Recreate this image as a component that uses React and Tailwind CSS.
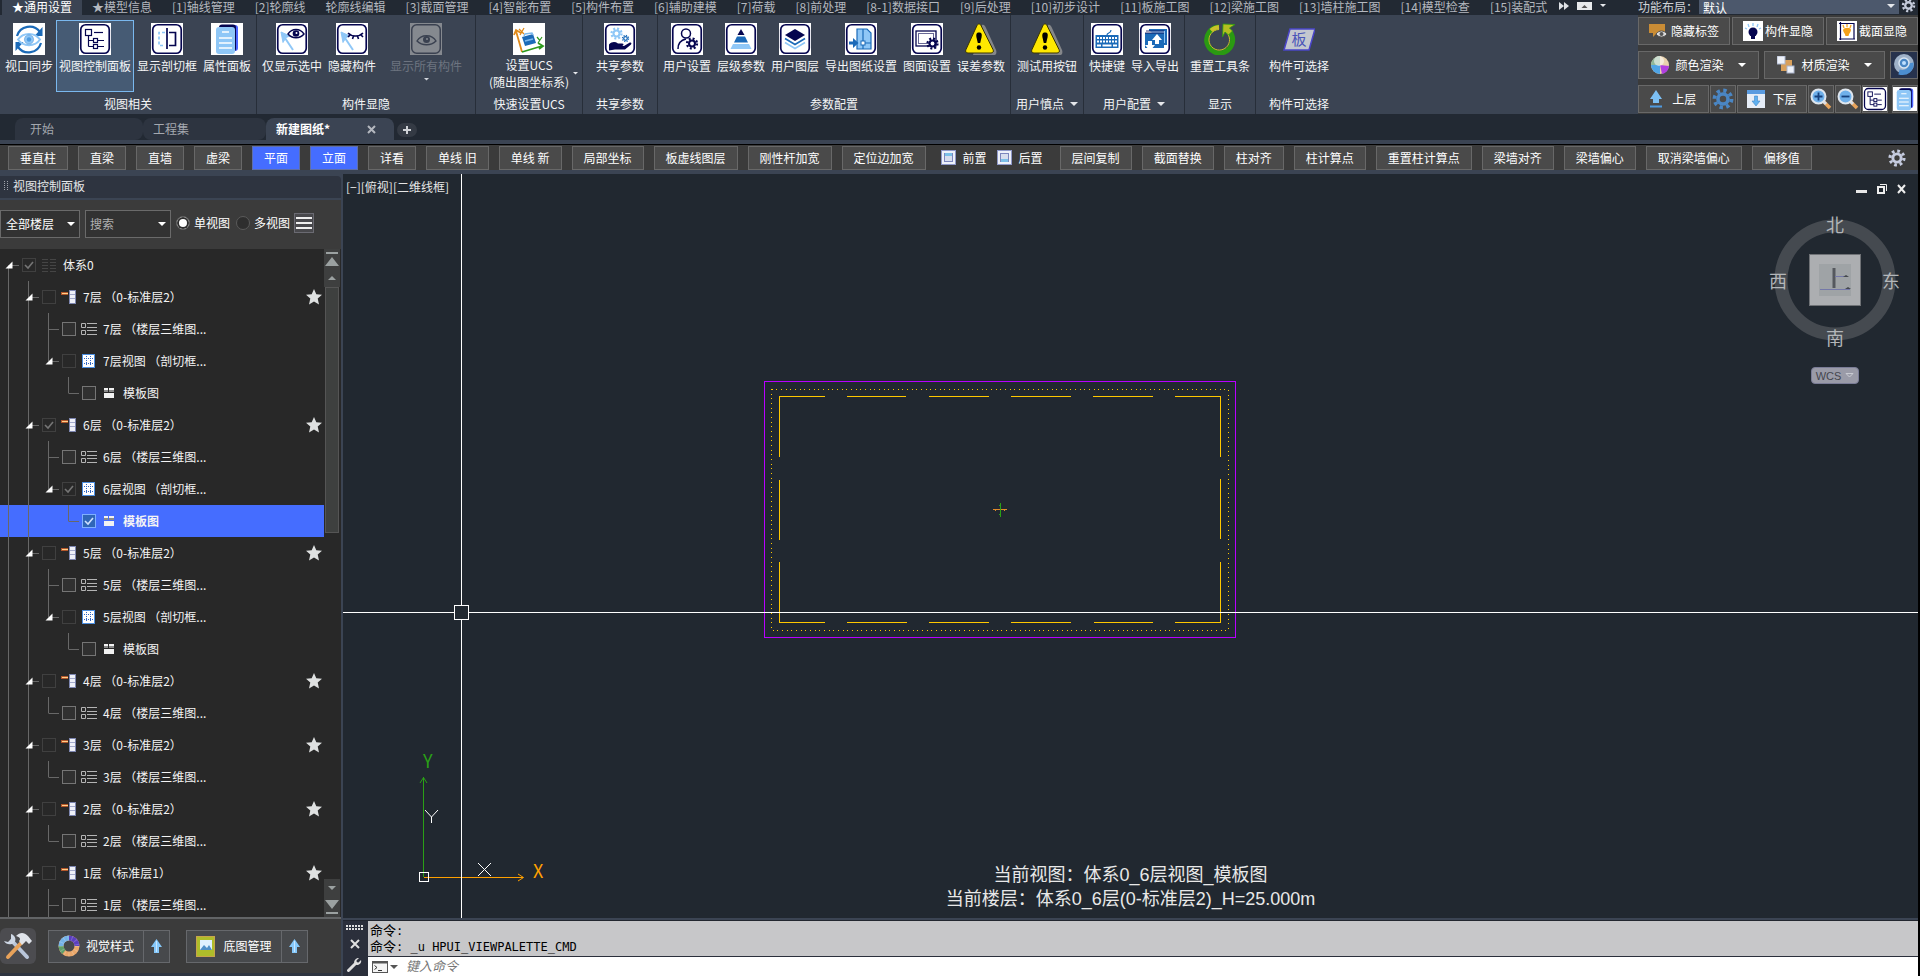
import React, { useState } from 'react';

const NAVY = '#05054f';
const SKY = '#8fc7f7';
const BLUE = '#1b6ab8';

/* ---------- shared drawings ---------- */

function Frame({ children }) {
  return (
    <svg width="32" height="32" viewBox="0 0 32 32" fill="none">
      <rect width="32" height="32" fill="#fff" />
      <rect x="1.75" y="1.75" width="28.5" height="28.5" rx="5" stroke={NAVY} strokeWidth="1.7" />
      {children}
    </svg>
  );
}

// teeth are a dashed ring around the body
function Gear({ cx, cy, r, color, hole = '#fff' }) {
  const tooth = (2 * Math.PI * r) / 16;
  return (
    <g fill="none">
      <circle cx={cx} cy={cy} r={r} stroke={color} strokeWidth={r * 0.45} strokeDasharray={`${tooth} ${tooth}`} />
      <circle cx={cx} cy={cy} r={r * 0.8} fill={color} />
      <circle cx={cx} cy={cy} r={r * 0.38} fill={hole} />
    </g>
  );
}

function Caret({ className = 'text-gray-200', size = 8 }) {
  return (
    <svg className={className} width={size} height={size / 2} viewBox="0 0 8 4">
      <path d="M0 0h8L4 4z" fill="currentColor" />
    </svg>
  );
}

function Pages({ size = 32 }) {
  return (
    <svg width={size} height={size} viewBox="0 0 32 32" fill="none">
      <rect width="32" height="32" fill="#fff" />
      <rect x="10" y="2" width="17" height="26" rx="3" fill="#4a63ff" />
      <rect x="8" y="1.5" width="17" height="27" rx="3" fill={NAVY} />
      <rect x="5" y="4" width="19" height="27" rx="3" fill={SKY} />
      <path d="M11 9h7M8 15h13M8 20h13M8 25h13" stroke="#fff" strokeWidth="1.5" />
    </svg>
  );
}

function TreeGlyph() {
  return (
    <g stroke={NAVY} strokeWidth="1.2">
      <rect x="6.5" y="6.5" width="6" height="6" />
      <path d="M15 9.5h9" />
      <path d="M9.500 13v10.500" />
      <path d="M9.500 17.500h5M9.500 23.500h5M19 17.500h6M19 23.500h6" />
      <rect x="14.500" y="15.500" width="4" height="4" />
      <rect x="14.500" y="21.500" width="4" height="4" />
    </g>
  );
}

function PickArrow() {
  return (
    <g>
      <path d="M17 27 9 15" stroke={SKY} strokeWidth="2" />
      <path d="M5 9l9 4-4 1.500-3 5z" fill={SKY} stroke={SKY} />
    </g>
  );
}

function Warning() {
  return (
    <svg width="32" height="32" viewBox="0 0 32 32">
      <path d="M17 2c2-1 3 1 4 3l10 22c1 3 0 5-2 5H8z" fill="#85878a" />
      <path d="M12 2.500c1-2 3-2 4 0l12 24c1 2 0 3.500-2 3.500H3c-2 0-3-1.500-2-3.500z" fill="#ffe800" stroke="#3a3500" strokeWidth="1" />
      <path d="M14 9.500c2.800 0 3 2 2.600 4.500L15.200 20h-2.400L11.400 14c-.4-2.500 0-4.500 2.600-4.500z" fill="#000" />
      <circle cx="14" cy="24.500" r="2.200" fill="#000" />
    </svg>
  );
}

/* ---------- ribbon icons ---------- */

const icons = {
  sync: (
    <svg width="32" height="32" viewBox="0 0 32 32" fill="none">
      <rect width="32" height="32" fill="#fff" />
      <path d="M4 13A13 13 0 0 1 27 9M28 20A13 13 0 0 1 5 24" stroke={BLUE} strokeWidth="2.200" />
      <path d="M29.500 4v9h-8zM2.500 28v-9h8z" fill={BLUE} />
      <path d="M5 16.500c5-7.500 17-7.500 22 0-5 7.500-17 7.500-22 0z" stroke={SKY} strokeWidth="2" />
      <circle cx="16" cy="16.500" r="4.600" fill={SKY} stroke={BLUE} strokeOpacity=".35" />
      <circle cx="16" cy="16.500" r="2.200" fill="#4d9be0" />
    </svg>
  ),
  tree: <Frame><TreeGlyph /></Frame>,
  section: (
    <Frame>
      <path d="M14 9.500H8v13h6" stroke={SKY} strokeWidth="1.700" strokeDasharray="3 2" />
      <path d="M16 5v21M18 9.500h6.500v13H18" stroke={NAVY} strokeWidth="1.700" />
    </Frame>
  ),
  pages: <Pages />,
  onlySelected: (
    <Frame>
      <PickArrow />
      <path d="M12 11c4-6 12-6 16 0-4 5-12 5-16 0z" stroke={NAVY} strokeWidth="1.400" />
      <circle cx="20" cy="10.500" r="3.300" fill={NAVY} />
      <circle cx="20.500" cy="10" r="1" fill="#fff" />
    </Frame>
  ),
  hide: (
    <Frame>
      <PickArrow />
      <path d="M12 10c4 4 11 4 15 0M14 12l-2 2M17.500 13l-1 3M21.500 13l1 3M25 12l2 2" stroke={NAVY} strokeWidth="1.600" />
    </Frame>
  ),
  showAll: (
    <svg width="32" height="32" viewBox="0 0 32 32" fill="none">
      <rect width="32" height="32" fill="#85898f" />
      <rect x="1.750" y="1.750" width="28.500" height="28.500" rx="5" stroke="#3a4150" strokeWidth="1.500" />
      <path d="M7 18c4-7 15-7 19 0-5 5-14 5-19 0z" stroke="#3a4150" strokeWidth="1.400" />
      <circle cx="16.500" cy="16.500" r="3.500" fill="#3a4150" />
      <circle cx="17" cy="16" r="1" fill="#85898f" />
    </svg>
  ),
  ucs: (
    <svg width="32" height="32" viewBox="0 0 32 32" fill="none">
      <rect width="32" height="32" fill="#fff" />
      <path d="M9 29 3 8M1 12l2-5 5 3" stroke="#e08a1a" strokeWidth="1.800" />
      <path d="m6 6 5 5M11 5 7 12" stroke="#e08a1a" strokeWidth="1.300" />
      <path d="m9 29 20-6M25 20l5 3-4 3" stroke="#2e9a1d" strokeWidth="1.800" />
      <path d="m24 14 2.500 3M29 14l-4 6" stroke="#2e9a1d" strokeWidth="1.200" />
      <path d="m9 14 11-3 3 9-11 3z" fill={BLUE} />
      <path d="m11 13 1-2 7-1 1 2M12 18l8-2" stroke="#7db9ee" strokeWidth="1.500" />
    </svg>
  ),
  share: (
    <Frame>
      <Gear cx={12.5} cy={10.5} r={5} color={SKY} />
      <Gear cx={21.5} cy={15.5} r={3} color={BLUE} />
      <path d="M5 21.500c3-3 6-3 9-1h4c2 0 2 2 0 2.500h-3 5l5-3c2-1 3 0 2 1.500l-6 5H11l-6 1z" fill={NAVY} />
    </Frame>
  ),
  user: (
    <Frame>
      <circle cx="15" cy="10.500" r="4.500" stroke={NAVY} strokeWidth="1.500" />
      <path d="M7 26c0-6 3-9 8-10" stroke={NAVY} strokeWidth="1.500" />
      <Gear cx={21} cy={20.5} r={5} color={NAVY} />
    </Frame>
  ),
  pyramid: (
    <Frame>
      <path d="M16 6l3.500 6h-7z" fill={NAVY} />
      <path d="M12 13.500h8l3 6H9z" fill={BLUE} />
      <path d="M8 21h16l2.500 5h-21z" fill={SKY} />
    </Frame>
  ),
  layers: (
    <Frame>
      <path d="M16 6l10 6-10 6-10-6z" fill={NAVY} />
      <path d="m6 15.500 10 6 10-6" stroke={BLUE} strokeWidth="1.600" />
      <path d="m6 19.500 10 6 10-6" stroke={SKY} strokeWidth="1.600" />
    </Frame>
  ),
  exportSheet: (
    <Frame>
      <path d="M12 6h10l4 4v16H12z" fill={SKY} stroke={BLUE} strokeWidth="1.200" />
      <path d="M18 6v20M18 20h8" stroke={BLUE} strokeWidth="1.200" />
      <rect x="16" y="18" width="4" height="4" fill="#fff" stroke={BLUE} />
      <path d="M4 18.500h4V15l5.500 5-5.500 5v-3.500H4z" fill={BLUE} />
    </Frame>
  ),
  drawing: (
    <Frame>
      <rect x="5" y="8" width="20" height="15" stroke={NAVY} strokeWidth="1.300" />
      <rect x="7.500" y="10.500" width="15" height="10" stroke={NAVY} strokeWidth="1" strokeOpacity=".6" />
      <Gear cx={21.5} cy={20.500} r={5} color={NAVY} />
    </Frame>
  ),
  warning: <Warning />,
  keyboard: (
    <Frame>
      <path d="M16 12c0-3 4-1 4-5" stroke={BLUE} strokeWidth="1.200" />
      <rect x="4.500" y="12" width="23" height="13" fill={BLUE} />
      <path d="M6 15h20M6 18.500h20" stroke="#fff" strokeWidth="2" strokeDasharray="2 1" />
      <path d="M6 22.500h4M11.500 22.500h9M22 22.500h4" stroke="#fff" strokeWidth="2" />
    </Frame>
  ),
  transfer: (
    <Frame>
      <path d="M10 7h17v14h-3" stroke={BLUE} strokeWidth="2" fill={SKY} />
      <path d="M6 10h19v15H6z" fill={BLUE} />
      <path d="M6 10h19M7 8h18" stroke={NAVY} strokeWidth=".8" />
      <path d="M18 11l5 6h-3v4h-4v-4h-3zM11 28l-5-6h3v-4h4v4h3z" fill="#fff" />
    </Frame>
  ),
  reset: (
    <svg width="32" height="32" viewBox="0 0 32 32" fill="none">
      <path d="M25.500 8.500A13 13 0 1 1 15 4" stroke="#2a9a12" strokeWidth="5" />
      <path d="M23 10A10.300 10.300 0 1 1 15 6.500" stroke="#c9c02a" strokeWidth="1" />
      <path d="M7 7.500A13 13 0 0 1 15 4" stroke="#c9c02a" strokeWidth="4" />
      <path d="M19 1l12 .5-5.500 3.500 3 3-4 4-3.500-3-2.500 5z" fill="#b5bf20" stroke="#2a9a12" strokeWidth=".8" />
    </svg>
  ),
  slab: (
    <svg width="32" height="32" viewBox="0 0 32 32">
      <path d="M7 6h25l-6 21H1z" fill="#c3c7cf" stroke="#4a45c8" strokeWidth="1.500" />
      <text x="16" y="22" textAnchor="middle" fontSize="15" fill="#4a55b8">板</text>
    </svg>
  ),
};

/* ---------- menu bar ---------- */

const menuTabs = [
  '★通用设置', '★模型信息', '[1]轴线管理', '[2]轮廓线', '轮廓线编辑', '[3]截面管理', '[4]智能布置',
  '[5]构件布置', '[6]辅助建模', '[7]荷载', '[8]前处理', '[8-1]数据接口', '[9]后处理', '[10]初步设计',
  '[11]板施工图', '[12]梁施工图', '[13]墙柱施工图', '[14]模型检查', '[15]装配式',
];

function MenuBar() {
  return (
    <nav className="flex h-[15px] min-w-0 flex-1 bg-[#222933] pl-[2px] text-[#b4b8bf]">
      {menuTabs.map((tab, i) => (
        <button
          key={tab}
          className={
            'h-[15px] shrink-0 px-[10px] pb-[2px] leading-[13px] ' + (i === 0 ? 'bg-[#3b4453] text-white' : '')
          }
        >
          {tab}
        </button>
      ))}
      <span className="flex items-center gap-2 pb-1 pl-[2px]">
        <svg width="10" height="8" viewBox="0 0 10 8"><path d="M0 0l5 4-5 4zM5 0l5 4-5 4z" fill="#dfe2e6" /></svg>
        <svg width="15" height="8" viewBox="0 0 15 8"><rect width="15" height="8" fill="#e8eaec" /><path d="M4.500 6h6L7.500 3z" fill="#555" /></svg>
        <Caret size={6} />
      </span>
    </nav>
  );
}

/* ---------- ribbon ---------- */

const ribbonGroups = [
  {
    title: '视图相关', width: 'w-[257px]',
    items: [
      { icon: 'sync', label: '视口同步' },
      { icon: 'tree', label: '视图控制面板', active: true },
      { icon: 'section', label: '显示剖切框' },
      { icon: 'pages', label: '属性面板' },
    ],
  },
  {
    title: '构件显隐', width: 'w-[219px]',
    items: [
      { icon: 'onlySelected', label: '仅显示选中' },
      { icon: 'hide', label: '隐藏构件' },
      { icon: 'showAll', label: '显示所有构件', menu: true, disabled: true },
    ],
  },
  { title: '快速设置UCS', width: 'w-[107px]', items: [{ icon: 'ucs', label: '设置UCS', sub: '(随出图坐标系)' }] },
  { title: '共享参数', width: 'w-[75px]', items: [{ icon: 'share', label: '共享参数', menu: true }] },
  {
    title: '参数配置', width: 'w-[353px]',
    items: [
      { icon: 'user', label: '用户设置' },
      { icon: 'pyramid', label: '层级参数' },
      { icon: 'layers', label: '用户图层' },
      { icon: 'exportSheet', label: '导出图纸设置' },
      { icon: 'drawing', label: '图面设置' },
      { icon: 'warning', label: '误差参数' },
    ],
  },
  { title: '用户慎点', width: 'w-[73px]', more: true, items: [{ icon: 'warning', label: '测试用按钮' }] },
  {
    title: '用户配置', width: 'w-[101px]', more: true,
    items: [
      { icon: 'keyboard', label: '快捷键' },
      { icon: 'transfer', label: '导入导出' },
    ],
  },
  { title: '显示', width: 'w-[71px]', items: [{ icon: 'reset', label: '重置工具条' }] },
  { title: '构件可选择', width: 'w-[86px]', last: true, items: [{ icon: 'slab', label: '构件可选择', menu: true }] },
];

function RibbonButton({ item }) {
  return (
    <button
      disabled={item.disabled}
      className={
        'flex h-[72px] flex-col items-center border px-[2px] pt-[2px] ' +
        (item.active ? 'border-[#7ab8ee] bg-[#465b74] ' : 'border-transparent ') +
        (item.disabled ? 'mx-2 text-[#6d7480]' : 'text-[#f4f5f6]')
      }
    >
      {icons[item.icon]}
      {item.sub ? (
        <span className="relative mt-px leading-[17px]">
          {item.label}
          <br />
          {item.sub}
          <span className="absolute top-[16px] left-full"><Caret size={5} className="mx-1 text-gray-200" /></span>
        </span>
      ) : (
        <span className="mt-[3px] leading-4 whitespace-nowrap">{item.label}</span>
      )}
      {item.menu && <Caret size={5} className="mt-1 text-gray-300" />}
    </button>
  );
}

function Ribbon() {
  return (
    <div className="flex h-[99px] overflow-hidden bg-[#3b4453] text-[#f4f5f6]">
      {ribbonGroups.map((g) => (
        <section
          key={g.title}
          className={'flex shrink-0 flex-col pt-[5px] ' + g.width + (g.last ? '' : ' border-r border-[#272e39]')}
        >
          <div className="flex justify-center">
            {g.items.map((item) => <RibbonButton key={item.label} item={item} />)}
          </div>
          <h2 className="mt-[3px] flex items-center justify-center gap-[6px] leading-[18px]">
            {g.title}
            {g.more && <Caret />}
          </h2>
        </section>
      ))}
    </div>
  );
}

/* ---------- quick panel at the right of the ribbon ---------- */

const quickBtn = 'flex h-7 items-center justify-center border border-[#686868] bg-[#4a4a4a] text-white';

function Magnifier({ plus }) {
  return (
    <svg width="22" height="22" viewBox="0 0 22 22" fill="none">
      <path d="m14 14 6 6" stroke="#e8a45c" strokeWidth="3.500" />
      <path d="m13 13 3 3" stroke="#d8dde6" strokeWidth="3" />
      <circle cx="8.500" cy="8.500" r="7" fill="#6fb0ea" stroke="#dfe6ee" strokeWidth="2" />
      <path d={plus ? 'M4.500 8.500h8M8.500 4.500v8' : 'M4.500 8.500h8'} stroke="#16407c" strokeWidth="1.800" />
    </svg>
  );
}

function QuickPanel() {
  return (
    <aside className="w-[280px] shrink-0">
      <div className="flex h-[15px] items-start bg-[#222933] text-[#cfd2d6]">
        <label htmlFor="layout" className="w-[61px] leading-[13px]">功能布局：</label>
        <span className="relative flex-1">
          <select
            id="layout"
            className="block h-[14px] w-full appearance-none bg-[#4c586c] pl-1 leading-[13px] text-white outline-none"
          >
            <option>默认</option>
          </select>
          <Caret className="pointer-events-none absolute top-1 right-1 text-gray-200" />
        </span>
        <button aria-label="设置" className="w-[19px] pl-[2px]">
          <svg width="15" height="13" viewBox="0 2 15 13"><Gear cx={7.5} cy={7.5} r={5.5} color="#c5cbdb" hole="#222933" /></svg>
        </button>
      </div>
      <div className="flex h-[99px] flex-col gap-[6px] bg-[#3b3b3b] pt-[2px]">
        <div className="flex gap-[2px]">
          <button className={quickBtn + ' flex-1 gap-1'}>
            <svg width="18" height="16" viewBox="0 0 18 16">
              <path d="M0 1h16v9H8l-4 4v-4H0z" fill="#c98c35" />
              <path d="M7 11c3-4 8-4 11 0-3 4-8 4-11 0z" fill="#ddd" stroke="#555" />
              <circle cx="12.500" cy="11" r="2" fill="#555" />
            </svg>
            隐藏标签
          </button>
          <button className={quickBtn + ' flex-1 gap-[2px]'}>
            <svg width="20" height="20" viewBox="0 0 20 20">
              <rect width="20" height="20" fill="#fff" />
              <path d="M10 2v3M5 3l1 3M15 3l-1 3M2 7l2 1M18 7l-2 1" stroke={SKY} strokeWidth="1.300" />
              <circle cx="10" cy="11" r="4.500" fill={NAVY} />
              <rect x="8" y="14" width="4" height="4" fill={NAVY} />
            </svg>
            构件显隐
          </button>
          <button className={quickBtn + ' flex-1 gap-[2px]'}>
            <svg width="20" height="20" viewBox="0 0 20 20" fill="none">
              <rect width="20" height="20" fill="#fff" />
              <path d="M3.500 1v18M2 2.500h15v16M2 18h16" stroke={NAVY} strokeWidth="1.200" />
              <path d="M10 3v3M6 4l1 3M14 4l-1 3" stroke="#f5a623" strokeWidth="1.300" />
              <path d="M6 9c1-3 8-3 8 0 0 2-2 3-2.500 6h-3C8 12 6 11 6 9z" fill="#f5a11a" />
            </svg>
            截面显隐
          </button>
        </div>
        <div className="flex gap-[5px]">
          <button className={quickBtn + ' flex-1 gap-[6px]'}>
            <svg width="18" height="18" viewBox="0 0 18 18">
              <circle cx="9" cy="9" r="9" fill="#e9d2ad" />
              <path d="M9 9 9 0A9 9 0 0 0 0 9z" fill="#8fb79a" />
              <path d="M9 9H0a9 9 0 0 0 9 9z" fill="#4fa4e6" />
              <path d="m9 9 2 9a9 9 0 0 0 7-8z" fill="#b13fe0" />
              <circle cx="8" cy="5" r="5" fill="#fff" fillOpacity=".55" />
            </svg>
            颜色渲染
            <Caret className="ml-2 text-white" />
          </button>
          <button className={quickBtn + ' flex-1 gap-[6px]'}>
            <svg width="18" height="18" viewBox="0 0 18 18">
              <rect x="4" y="4" width="11" height="11" fill="#d9a05b" />
              <rect x="0" y="0" width="8" height="8" fill="#eef2fa" stroke="#aab4cc" />
              <rect x="10" y="10" width="7" height="7" fill="#eef2fa" stroke="#aab4cc" />
            </svg>
            材质渲染
            <Caret className="ml-2 text-white" />
          </button>
          <button aria-label="渲染" className={quickBtn + ' w-7'}>
            <svg width="26" height="26" viewBox="0 0 26 26" fill="none">
              <rect width="26" height="26" fill="#26324d" />
              <circle cx="13" cy="12" r="10" fill="#9fb2c9" />
              <path d="M8 20c8 2 13-3 12-9" stroke="#4c8ed0" strokeWidth="5" />
              <circle cx="13" cy="11" r="5" fill="#4a86c4" stroke="#d8e5f2" strokeWidth="1.500" />
              <circle cx="13" cy="11" r="2" fill="#bfe0ff" />
            </svg>
          </button>
        </div>
        <div className="flex gap-px">
          <button className={quickBtn + ' flex-1 gap-[10px]'}>
            <svg width="12" height="18" viewBox="0 0 12 18">
              <path d="M6 0l6 9H9v4H3V9H0z" fill="#7cc0f5" />
              <path d="M0 16.500h12" stroke="#4f9be0" strokeWidth="2" />
            </svg>
            上层
          </button>
          <button aria-label="楼层设置" className={quickBtn + ' w-[26px]'}>
            <svg width="22" height="22" viewBox="0 0 22 22"><Gear cx={11} cy={11} r={8.5} color="#4a86c4" hole="#4a4a4a" /></svg>
          </button>
          <button className={quickBtn + ' flex-1 gap-2'}>
            <svg width="18" height="18" viewBox="0 0 18 18">
              <rect width="18" height="18" fill="#e6edf7" />
              <rect width="18" height="4" fill="#5a9be0" />
              <path d="M7.500 6h3v5h2.500l-4 5-4-5h2.500z" fill="#5fb0f0" stroke="#3f86c8" strokeWidth=".6" />
            </svg>
            下层
          </button>
          <button aria-label="放大" className={quickBtn + ' w-[26px]'}><Magnifier plus /></button>
          <button aria-label="缩小" className={quickBtn + ' w-[26px]'}><Magnifier /></button>
          <button aria-label="视图控制面板" className={quickBtn + ' w-[26px]'}>
            <svg width="24" height="24" viewBox="0 0 32 32" fill="none">
              <rect width="32" height="32" fill="#fff" />
              <rect x="2" y="2" width="28" height="28" rx="5" stroke={NAVY} strokeWidth="1.700" />
              <TreeGlyph />
            </svg>
          </button>
          <button aria-label="属性面板" className={quickBtn + ' ml-[3px] w-[26px]'}><Pages size={24} /></button>
        </div>
      </div>
    </aside>
  );
}

/* ---------- document tabs ---------- */

function DocTabs() {
  return (
    <div className="flex h-[26px] items-end bg-[#222933] pl-[15px] text-[#a4a8af]">
      <button className="h-[22px] w-[128px] rounded-t-lg rounded-br-lg bg-[#2d3440] pl-[15px] text-left">开始</button>
      <button className="h-[22px] w-[123px] rounded-t-lg rounded-b-lg bg-[#2d3440] pl-[10px] text-left">工程集</button>
      <div className="flex h-[22px] w-[128px] items-center justify-between rounded-t-lg bg-[#3b4453] pr-[18px] pl-[10px] font-bold text-white">
        <button className="font-bold">新建图纸*</button>
        <button aria-label="关闭">
          <svg width="9" height="9" viewBox="0 0 9 9"><path d="M1 1l7 7M8 1 1 8" stroke="#b4b8bf" strokeWidth="2" /></svg>
        </button>
      </div>
      <button aria-label="新建" className="mb-[3px] ml-[3px] flex h-[14px] w-5 items-center justify-center rounded-lg bg-[#343a44]">
        <svg width="8" height="8" viewBox="0 0 8 8"><path d="M4 0v8M0 4h8" stroke="#cfd2d6" strokeWidth="2" /></svg>
      </button>
    </div>
  );
}

/* ---------- tool bar ---------- */

const toolsLeft = [
  '垂直柱', '直梁', '直墙', '虚梁', '平面', '立面', '详看', '单线 旧', '单线 新', '局部坐标',
  '板虚线图层', '刚性杆加宽', '定位边加宽',
];
const toolsRight = [
  '层间复制', '截面替换', '柱对齐', '柱计算点', '重置柱计算点', '梁墙对齐', '梁墙偏心', '取消梁墙偏心', '偏移值',
];

function ToolButton({ label }) {
  const on = label === '平面' || label === '立面';
  return (
    <button
      className={
        'h-6 shrink-0 border px-[11px] leading-[22px] whitespace-nowrap text-white ' +
        (on ? 'border-[#5f6fa8] bg-[#456dff]' : 'border-[#686868] bg-[#4a4a4a]')
      }
    >
      {label}
    </button>
  );
}

function OrderIcon({ back }) {
  return (
    <svg width="15" height="15" viewBox="0 0 15 15">
      <rect x=".5" y=".5" width="14" height="14" fill="#eef1fa" stroke="#8f98c8" />
      <rect x="3.500" y="3.500" width="8" height="8" fill="#d8deee" stroke="#7c86bd" />
      <rect x="4" y={back ? 9 : 3} width="7" height="3" fill="#7cc0e8" />
    </svg>
  );
}

function ToolBar() {
  return (
    <div className="border-t-4 border-b-4 border-[#3b4453]">
      <div className="flex h-[26px] items-center gap-[10px] overflow-hidden border-t border-black bg-[#3b3b3b] pr-3 pl-2">
        {toolsLeft.map((t) => <ToolButton key={t} label={t} />)}
        <div className="mx-[5px] flex shrink-0 items-center gap-[10px] pr-[2px] text-white">
          <button className="flex items-center gap-[7px]"><OrderIcon />前置</button>
          <button className="flex items-center gap-[7px]"><OrderIcon back />后置</button>
        </div>
        {toolsRight.map((t) => <ToolButton key={t} label={t} />)}
        <button aria-label="工具条设置" className="ml-auto shrink-0">
          <svg width="18" height="18" viewBox="0 0 18 18"><Gear cx={9} cy={9} r={7} color="#c5cbdf" hole="#3b3b3b" /></svg>
        </button>
      </div>
    </div>
  );
}

/* ---------- view control panel ---------- */

// kind decides the icon, nested floors carry a view and its sheet
const floorRows = (n, spec, nested) => [
  { id: n + 'f', level: 1, kind: 'floor', label: n + '层 （' + spec + '）', open: true, star: true, checked: n === 6, dim: true },
  { id: n + 'm', level: 2, kind: 'model', label: n + '层 （楼层三维图...', tail: nested },
  ...(nested && n !== 1
    ? [
        { id: n + 'v', level: 2, kind: 'view', label: n + '层视图 （剖切框...', open: true, checked: n === 6, dim: true },
        { id: n + 't', level: 3, kind: 'sheet', label: '模板图', checked: n === 6, selected: n === 6 },
      ]
    : []),
];

const treeRows = [
  { id: 'root', level: 0, kind: 'root', label: '体系0', open: true, checked: true, dim: true },
  ...floorRows(7, '0-标准层2', true),
  ...floorRows(6, '0-标准层2', true),
  ...floorRows(5, '0-标准层2', true),
  ...floorRows(4, '0-标准层2', false),
  ...floorRows(3, '0-标准层2', false),
  ...floorRows(2, '0-标准层2', false),
  ...floorRows(1, '标准层1', true),
];

function RowIcon({ kind }) {
  if (kind === 'root') {
    return (
      <svg width="16" height="14" viewBox="0 0 16 14">
        <path d="M1 1.500h6M1 4.500h6M1 7.500h6M1 10.500h6M1 13.500h6M9 1.500h6M9 4.500h6M9 7.500h6M9 10.500h6M9 13.500h6" stroke="#454545" />
      </svg>
    );
  }
  if (kind === 'floor') {
    return (
      <svg width="16" height="14" viewBox="0 0 16 14">
        <rect x="0" y="2" width="7" height="3" fill="#b3572b" />
        <rect x="1" y="3" width="6" height="1" fill="#ffd08a" />
        <rect x="8.500" y=".5" width="6" height="13" fill="#eef0f8" stroke="#7d86b0" />
        <path d="M9 4.500h5M9 8.500h5" stroke="#a3aacb" />
      </svg>
    );
  }
  if (kind === 'model') {
    return (
      <svg width="16" height="14" viewBox="0 0 16 14" fill="none" stroke="#b4b4b4">
        <path d="M.5 1.500h4v4h-4zM.5 8.500h4v4h-4zM6 1.500h10M6 5.500h10M6 8.500h10M6 12.500h10" />
      </svg>
    );
  }
  if (kind === 'view') {
    return (
      <svg width="16" height="14" viewBox="0 0 16 14">
        <rect x="1.500" y=".5" width="12" height="13" fill="#fff" stroke="#4d8fe0" />
        <path d="M3 4.500h10M3 9.500h10M5.500 2v10M9.500 2v10" stroke="#2f66c4" strokeDasharray="1 1" />
      </svg>
    );
  }
  return (
    <svg width="16" height="14" viewBox="0 0 16 14">
      <path d="M3 2h4v4H3zM8 2h5v2H8zM3 7h10v5H3z" fill="#f2f2f2" />
      <path d="M8 4h5v2H8zM3 4h4v2H3z" fill="#8a8a8a" />
    </svg>
  );
}

function Guides({ row }) {
  const { level, open, tail } = row;
  const x = level * 20 + 8.5;
  const passing = [];
  if (level >= 1) passing.push(8.5);
  if (level >= 2) passing.push(28.5);
  let own = `M${x} 0V16`;
  if (level === 0) own = `M${x} 16V32`;
  if (level === 1 || tail) own = `M${x} 0V32`;
  return (
    <svg className="shrink-0" width={level * 20 + 22} height="32" stroke="#686868">
      {passing.map((p) => <path key={p} d={`M${p} 0V32`} />)}
      <path d={own} />
      <path d={`M${x} 16.5H${level * 20 + 19}`} />
      {open && <path d={`M${x - 3} 19.5h7v-7z`} fill="#fff" stroke="none" />}
    </svg>
  );
}

function TreeRow({ row }) {
  const [checked, setChecked] = useState(!!row.checked);
  let box = row.dim ? 'border-[#404040]' : 'border-[#757575] bg-[#303030]';
  if (row.selected) box = 'border-[#7fb0ff] bg-[#2f66b8]';
  return (
    <li className={'flex h-8 items-center text-[#f4f4f4] ' + (row.selected ? 'bg-[#456dff] font-bold' : '')}>
      <Guides row={row} />
      <label className="flex min-w-0 flex-1 items-center">
        <span className="relative mr-[5px] h-[14px] w-[14px]">
          <input
            type="checkbox"
            checked={checked}
            onChange={(e) => setChecked(e.target.checked)}
            className={'block h-[14px] w-[14px] appearance-none border ' + box}
          />
          {checked && (
            <svg className="pointer-events-none absolute inset-0" width="14" height="14" viewBox="0 0 14 14" fill="none">
              <path d="m3 7 3 3 5-6" stroke={row.selected ? '#cfe0ff' : '#757575'} strokeWidth="1.600" />
            </svg>
          )}
        </span>
        <RowIcon kind={row.kind} />
        <span className="ml-[6px] whitespace-pre">{row.label}</span>
      </label>
      {row.star && (
        <svg className="mr-[2px]" width="16" height="16" viewBox="0 0 16 16">
          <path d="M8 0l2.300 5.300 5.700.5-4.300 3.800L13 15.500 8 12.500l-5 3 1.300-5.900L0 5.800l5.700-.5z" fill="#dfe1e1" />
        </svg>
      )}
    </li>
  );
}

function UpArrow() {
  return (
    <svg width="11" height="14" viewBox="0 0 11 14">
      <path d="M5.500 0l5.500 8H8v6H3V8H0z" fill="#86c8fa" />
      <path d="M5.500 2v11" stroke="#c7e6ff" />
    </svg>
  );
}

function ViewPanel() {
  const [mode, setMode] = useState('single');
  const radio = 'h-[14px] w-[14px] appearance-none rounded-full border border-[#5a5a5a] bg-[#2e2e2e] checked:bg-white checked:shadow-[inset_0_0_0_2px_#2e2e2e]';
  return (
    <aside className="flex w-[341px] shrink-0 flex-col pt-[2px]">
      <h2 className="flex h-[22px] items-center gap-[5px] rounded-tr bg-[#2e3440] pb-[2px] pl-1 text-[#e4e6e8]">
        <svg width="4" height="10" viewBox="0 0 4 10"><path d="M.5 0v10M3.500 0v10" stroke="#a0a4ab" strokeDasharray="1 1" /></svg>
        视图控制面板
      </h2>
      <div className="mt-[2px] flex h-[49px] items-start bg-[#3b3b3b] pt-[10px] text-white">
        <span className="relative mr-[5px]">
          <select aria-label="楼层" className="block h-7 w-20 appearance-none border border-[#6a6a6a] bg-[#323232] pl-[5px] outline-none">
            <option>全部楼层</option>
          </select>
          <Caret className="pointer-events-none absolute top-3 right-[5px] text-white" />
        </span>
        <span className="relative mr-[5px]">
          <select aria-label="搜索" className="block h-7 w-[86px] appearance-none border border-[#6a6a6a] bg-[#323232] pl-1 text-[#b0b0b0] outline-none">
            <option>搜索</option>
          </select>
          <Caret className="pointer-events-none absolute top-3 right-[5px] text-white" />
        </span>
        <label className="mr-[6px] flex h-[26px] items-center gap-1">
          <input type="radio" name="mode" className={radio} checked={mode === 'single'} onChange={() => setMode('single')} />
          单视图
        </label>
        <label className="mr-1 flex h-[26px] items-center gap-1">
          <input type="radio" name="mode" className={radio} checked={mode === 'multi'} onChange={() => setMode('multi')} />
          多视图
        </label>
        <button aria-label="菜单" className="mt-[3px] flex h-5 w-5 items-center justify-center border border-[#6a6a72] bg-[#48484c]">
          <svg width="16" height="12" viewBox="0 0 16 12"><path d="M0 1h16M0 6h16M0 11h16" stroke="#eee" strokeWidth="2" /></svg>
        </button>
      </div>
      <div className="flex min-h-0 flex-1 bg-[#282828]">
        <ul className="min-w-0 flex-1 overflow-hidden">
          {treeRows.map((row) => <TreeRow key={row.id} row={row} />)}
        </ul>
        <div className="flex w-[17px] flex-col justify-between">
          <div className="flex flex-1 flex-col">
            <svg className="block bg-[#3e3f3f]" width="16" height="38" viewBox="0 0 16 38">
              <path d="M2 3h12v2H2zM8 8l7 9H1zM8 27l4 4H4z" fill="#9ba1a1" />
            </svg>
            <div className="mx-px h-[39%] w-[14px] border border-[#555] bg-[#3e403f]" />
          </div>
          <svg className="block bg-[#3e3f3f]" width="16" height="38" viewBox="0 0 16 38">
            <path d="M4 7h8l-4 4zM1 21h14l-7 9zM2 33h12v2H2z" fill="#9ba1a1" />
          </svg>
        </div>
      </div>
      <div className="flex h-14 items-center border-t-2 border-[#626466] bg-[#3b3b3b] text-white">
        <button aria-label="工具" className="mr-3 flex h-9 w-9 items-center justify-center rounded-md bg-[#4c4c50]">
          <svg width="30" height="28" viewBox="0 0 30 28" fill="none">
            <path d="M9 9l15 16" stroke="#b9c6da" strokeWidth="4" strokeLinecap="round" />
            <path d="M8 2c4 1 6 6 3 9-3 2-8 2-10-2l4 1 3-3z" fill="#cdd6e4" />
            <path d="M20 9 5 25" stroke="#e8a25a" strokeWidth="4" strokeLinecap="round" />
            <path d="M13 4c4-4 8-4 12 0l4 5-3 3-3-3-4 4-3-4c2-2 1-4-3-5z" fill="#dfe3ea" />
          </svg>
        </button>
        <div className="mr-4 flex h-[33px] border border-[#66686c] bg-[#47494c]">
          <button className="flex w-[94px] items-center justify-center gap-[6px]">
            <svg width="22" height="22" viewBox="0 0 22 22" fill="none" strokeWidth="5">
              <circle cx="11" cy="11" r="8" stroke="#e9a76a" />
              <path d="M3 11a8 8 0 0 1 8-8" stroke="#74b2e8" />
              <path d="M11 3a8 8 0 0 1 8 8" stroke="#5a3fc0" />
              <path d="M3 11a8 8 0 0 0 3 6" stroke="#5f9e6a" />
              <circle cx="11" cy="11" r="8" stroke="#fff" strokeOpacity=".2" strokeDasharray="1 3" />
            </svg>
            视觉样式
          </button>
          <button aria-label="上传视觉样式" className="flex w-[26px] items-center justify-center border-l border-[#66686c]"><UpArrow /></button>
        </div>
        <div className="flex h-[33px] border border-[#66686c] bg-[#47494c]">
          <button className="flex w-[94px] items-center justify-center gap-2">
            <svg width="19" height="21" viewBox="0 0 19 21">
              <rect x=".5" y=".5" width="18" height="20" fill="#aebd2a" stroke="#c8a54a" />
              <rect x="4" y="4" width="12" height="10" fill="#dff0ff" />
              <path d="M4 14l4-5 3 3 2-3 3 5z" fill="#4f8fc8" />
            </svg>
            底图管理
          </button>
          <button aria-label="上传底图" className="flex w-[26px] items-center justify-center border-l border-[#66686c]"><UpArrow /></button>
        </div>
      </div>
      <div className="h-[3px] bg-[#2e3440]" />
    </aside>
  );
}

/* ---------- model space ---------- */

function Drawing() {
  return (
    <svg className="absolute inset-0 h-full w-full" fill="none" shapeRendering="crispEdges">
      {/* slab outline */}
      <rect x="421.5" y="207.5" width="471" height="256" stroke="#b800ff" />
      <rect x="428.5" y="215.5" width="457" height="241" stroke="#ffc800" strokeDasharray="1 3.667" />
      <g stroke="#ffc800">
        <path d="M436.500 283v-60.500H482M504 222.500h59M586 222.500h60M668 222.500h60M750 222.500h60M832 222.500h45.500V283" />
        <path d="M436.500 388v60.500H482M504 448.500h60M586 448.500h60M668 448.500h60M751 448.500h59M832 448.500h45.500V388" />
        <path d="M436.500 306v60M877.500 305v60" />
      </g>
      <path d="M650 335.500h14M652.500 335v2M661.500 335v2" stroke="#e08a2a" />
      <path d="M657.500 329v14M656 331.500h2M656 340.500h2" stroke="#2aa016" />

      {/* UCS icon */}
      <path d="M80.500 703V603" stroke="#2aa016" />
      <path d="M77 609l3.500-5.500L84 609" stroke="#2aa016" shapeRendering="auto" />
      <path d="M81 703.500h99" stroke="#ffa000" />
      <path d="M175 700l5.500 3.500L175 707" stroke="#ffa000" shapeRendering="auto" />
      <rect x="76.5" y="698.5" width="9" height="9" stroke="#fff" />
      <path d="M82 636l6.500 7 6.500-7M88.500 643v6M135 689l13 13M148 689l-13 13" stroke="#fff" shapeRendering="auto" />
      <g fontFamily="Noto Sans CJK SC, sans-serif" fontSize="18">
        <text x="80" y="594" fill="#2aa016">Y</text>
        <text x="190" y="704" fill="#ffa000">X</text>
      </g>

      {/* cursor */}
      <path d="M118.500 0V431M118.500 445V2000M0 438.500H112M125 438.500H4000" stroke="#fff" />
      <rect x="111.5" y="431.5" width="14" height="14" stroke="#fff" />
    </svg>
  );
}

function ViewCube() {
  return (
    <div className="absolute top-[39px] right-3 w-[142px]">
      <svg width="142" height="134" viewBox="0 0 142 134">
        <circle cx="71" cy="67" r="54" fill="none" stroke="#454a50" strokeWidth="13" />
        <rect x="45.500" y="41.500" width="51" height="51" fill="#acaeb1" stroke="#6f7276" />
        <rect x="55" y="51" width="32" height="32" fill="#9fa3a6" />
        <path d="M70 55v20" stroke="#55585e" strokeWidth="3" />
        <path d="M71 63.500h9M56 76.500h30" stroke="#7478a8" />
        <path d="M79 64l3-2 3 2zM81 76l3-2 3 2z" fill="#44474d" />
        <g fill="#b3b6b9" fontSize="18" textAnchor="middle" fontFamily="Noto Sans CJK SC, sans-serif">
          <text x="71" y="19">北</text>
          <text x="71" y="132">南</text>
          <text x="14" y="75">西</text>
          <text x="127" y="75">东</text>
        </g>
      </svg>
      <button className="mx-auto mt-5 flex h-[17px] w-12 items-center justify-center gap-1 rounded border border-[#7a7c96] bg-[#9a9ba8] font-[Liberation_Sans,sans-serif] text-[11px] text-[#44464e]">
        WCS
        <svg width="9" height="5" viewBox="0 0 9 5"><path d="M1 .5h7L4.500 4z" fill="none" stroke="#c9cbd2" /></svg>
      </button>
    </div>
  );
}

function ModelSpace() {
  return (
    <div className="relative min-h-0 flex-1 overflow-hidden bg-[#212830]">
      <Drawing />
      <p className="absolute top-1 left-[3px] leading-[18px] text-[#e6e6e6]">[−][俯视][二维线框]</p>
      <div className="absolute top-[10px] right-3 flex items-center gap-[10px]">
        <button aria-label="最小化"><svg width="11" height="10" viewBox="0 0 11 10"><path d="M0 7.500h11" stroke="#e8e8e8" strokeWidth="3" /></svg></button>
        <button aria-label="还原">
          <svg width="10" height="10" viewBox="0 0 10 10" fill="none" stroke="#eee"><path d="M3 .5h6.500V7" /><rect x="1" y="3" width="6" height="6" strokeWidth="2" /></svg>
        </button>
        <button aria-label="关闭视口"><svg width="9" height="10" viewBox="0 0 9 10"><path d="M1 1l7 8M8 1 1 9" stroke="#eee" strokeWidth="2" /></svg></button>
      </div>
      <ViewCube />
      <div className="absolute inset-x-0 bottom-[7px] text-center font-[Liberation_Sans,Noto_Sans_CJK_SC,sans-serif] text-[18px] leading-6 text-[#e8e8e8]">
        <p>当前视图：体系0_6层视图_模板图</p>
        <p>当前楼层：体系0_6层(0-标准层2)_H=25.000m</p>
      </div>
    </div>
  );
}

function CommandLine() {
  return (
    <div className="flex h-14 border-t border-[#22262f] bg-[#2b2f3b]">
      <div className="flex w-[25px] flex-col items-center justify-between pt-1 pr-[2px] pb-1">
        <svg width="17" height="5" viewBox="0 0 17 5"><path d="M0 1h17M0 4h17" stroke="#e0e0e0" strokeWidth="2" strokeDasharray="2 1" /></svg>
        <button aria-label="关闭命令行"><svg width="10" height="10" viewBox="0 0 10 10"><path d="M1 1l8 8M9 1 1 9" stroke="#e0e0e0" strokeWidth="2" /></svg></button>
        <button aria-label="自定义">
          <svg width="15" height="15" viewBox="0 0 15 15" fill="none"><path d="M1.500 13.500 9 6" stroke="#e0e0e0" strokeWidth="3" strokeLinecap="round" /><path d="M12 1 9.500 3.500v2h2L14 3c1 3-2 5-4 5S6 5 8 3c1-1.500 2-2 4-2z" fill="#e0e0e0" /></svg>
        </button>
      </div>
      <div className="flex min-w-0 flex-1 flex-col font-[DejaVu_Sans_Mono,Noto_Sans_CJK_SC,monospace] text-black">
        <div className="h-[35px] bg-[#c7c7c9] pt-[2px] pl-[2px]">
          <p className="h-4 leading-4"><span className="text-[13px]">命令</span>:</p>
          <p className="h-4 leading-4"><span className="text-[13px]">命令</span>: _u HPUI_VIEWPALETTE_CMD</p>
        </div>
        <div className="mt-px flex min-h-0 flex-1 items-center bg-white pl-1">
          <svg width="16" height="12" viewBox="0 0 16 12" fill="none">
            <rect x=".5" y=".5" width="15" height="11" fill="#f4f4f4" stroke="#555" />
            <path d="M0 1.500h16" stroke="#555" strokeWidth="2" />
            <path d="M2.500 4.500 5 6.500 2.500 8.500M6 9.500h4" stroke="#333" />
          </svg>
          <Caret className="mr-2 ml-[2px] text-[#555]" />
          <input
            aria-label="命令"
            placeholder="键入命令"
            className="h-4 flex-1 text-[13px] leading-4 italic outline-none placeholder:text-[#777]"
          />
        </div>
      </div>
    </div>
  );
}

function App() {
  return (
    <div className="flex h-screen flex-col overflow-hidden border-r-2 border-black bg-[#3b4453] font-[Noto_Sans_CJK_SC,sans-serif] text-[12px] leading-4">
      <header className="flex">
        <div className="min-w-0 flex-1">
          <MenuBar />
          <Ribbon />
        </div>
        <QuickPanel />
      </header>
      <DocTabs />
      <ToolBar />
      <div className="flex min-h-0 flex-1">
        <ViewPanel />
        <main className="ml-[2px] flex min-w-0 flex-1 flex-col">
          <ModelSpace />
          <div className="h-[2px] bg-[#3b4453]" />
          <CommandLine />
        </main>
      </div>
    </div>
  );
}

export default App;
